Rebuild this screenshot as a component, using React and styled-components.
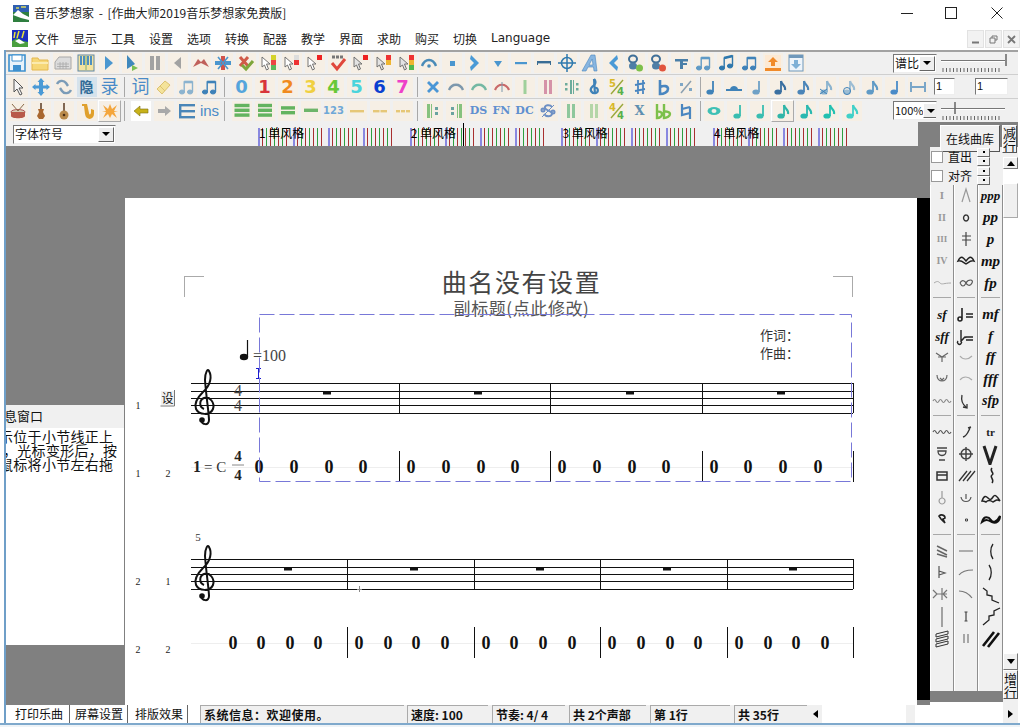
import React from 'react';
import styled, { createGlobalStyle } from 'styled-components';

const GlobalStyle = createGlobalStyle`
  html, body { margin: 0; padding: 0; background: #fff; }
  body { font-family: "Noto Sans CJK SC", "Liberation Sans", sans-serif; font-size: 12px; color: #111; }
  * { box-sizing: border-box; }
`;

const Win = styled.div`
  width: 1020px; height: 727px; display: flex; flex-direction: column; overflow: hidden; background: #fff;
`;
const TitleBar = styled.div` height: 26px; display: flex; align-items: center; padding-left: 13px; gap: 5px; `;
const TitleText = styled.span` font-size: 12px; color: #222; line-height: 26px; word-spacing: 2px; `;
const WinButtons = styled.div` margin-left: auto; display: flex; `;
const WinBtn = styled.div` width: 46px; height: 26px; display: flex; align-items: center; justify-content: center; padding-left: ${p => p.$pl || 0}px; `;
const MenuBar = styled.div` height: 24px; display: flex; align-items: center; padding-left: 12px; `;
const MenuItem = styled.span`
  width: 38px; font-size: 12px; color: #222; margin-left: ${p => (p.$first ? '7px' : '0')};
  font-family: "DejaVu Sans", "Noto Sans CJK SC", sans-serif;
`;
const MdiButtons = styled.div` margin-left: auto; display: flex; gap: 1px; padding-top: 2px; `;
const MdiBtn = styled.div`
  width: 17px; height: 18px; background: #f2f2f2; border: 1px solid #e2e2e2; color: #777;
  display: flex; align-items: center; justify-content: center;
`;
const Client = styled.div`
  flex: 1; margin: 0 2px 0 4px; border-left: 2px solid #6f9fc8; display: flex; flex-direction: column; min-height: 0;
`;
const ToolRow = styled.div`
  height: 24px; background: #f0f0f0; display: flex; align-items: center;
  border-top: ${p => (p.$first ? '2px solid #a2a2a2' : '1px solid #cfcfcf')};
`;
const ToolCell = styled.div`
  flex: none; width: ${p => p.$w || 23}px; height: 22px; display: flex; align-items: center; justify-content: center;
  ${p => p.$on && 'border: 1px solid; border-color: #fff #aaa #aaa #fff;'}
`;
const Tile = styled.div`
  width: 20px; height: 20px; display: flex; align-items: center; justify-content: center;
  background: ${p => (p.$plain ? '#fff' : p.$box ? '#d5e2ec' : '#f6efe5')};
`;
const ToolSep = styled.div`
  flex: none; width: ${p => p.$w}px; height: 20px; position: relative;
  &::after { content: ''; position: absolute; left: 3px; top: 0; bottom: 0; width: 1px; background: #a8a8a8; }
`;
const GlyphText = styled.span`
  font-family: ${p => (p.$serif ? '"DejaVu Serif", serif' : p.$wide ? '"DejaVu Sans", sans-serif' : '"Liberation Sans", "Noto Sans CJK SC", sans-serif')};
  font-size: ${p => p.$s || 17}px; font-weight: ${p => (p.$light ? 400 : 700)}; color: ${p => p.$c}; line-height: 1;
`;
const RightTools = styled.div` margin-left: auto; display: flex; align-items: center; gap: ${p => p.$gap || 3}px; padding-right: ${p => p.$pr || 10}px; `;
const Combo = styled.div`
  width: ${p => p.$w}px; flex: none; height: 19px; background: #fff; display: flex; align-items: center; justify-content: space-between; white-space: nowrap;
  border: 1px solid; border-color: #777 #eee #eee #777; font-size: ${p => p.$fs || 12}px; padding-left: 1px; line-height: 1; overflow: hidden;
`;
const ComboArrow = styled.div`
  flex: none; width: 16px; height: 15px; background: #eee; border: 1px solid; border-color: #fff #666 #666 #fff;
  display: flex; align-items: center; justify-content: center; margin-right: 1px;
  &::after { content: ''; border: 4px solid transparent; border-top: 4px solid #000; border-bottom: 0; }
`;
const NumBox = styled.div`
  width: ${p => p.$w}px; height: 17px; background: #fff; font-size: 11px; padding-left: 1px; line-height: 15px;
  border: 1px solid; border-color: #777 #eee #eee #777; font-family: "Liberation Sans", sans-serif;
`;
const Workspace = styled.div` height: 583px; display: flex; background: #808080; `;
const Center = styled.div` width: 924px; flex: none; display: flex; flex-direction: column; `;
const RulerRow = styled.div` height: 24px; width: 912px; background: #f0f0f0; display: flex; align-items: center; padding-left: 7px; `;
const RulerArea = styled.div` position: relative; margin-left: 142px; height: 24px; flex: none; `;
const RulerLabels = styled.div` position: absolute; left: 0; top: 4px; display: flex; `;
const RulerLabel = styled.span` width: 151.7px; font-size: 12px; line-height: 14px; color: #000; padding-left: 1px; `;
const GrayBand = styled.div` height: 52px; `;
const PageRow = styled.div` flex: 1; display: flex; min-height: 0; `;
const Rail = styled.div` width: 119px; flex: none; padding-top: 207px; `;
const InfoPanel = styled.div` width: 118px; height: 240px; background: #fff; overflow: hidden; `;
const InfoHead = styled.div` height: 23px; background: #f0f0f0; font-size: 13px; line-height: 22px; margin-bottom: 1px; text-indent: -15px; overflow: hidden; `;
const InfoLine = styled.div` font-size: 14px; line-height: 14px; white-space: nowrap; letter-spacing: .3px; margin-left: ${p => p.$x}px; `;
const Sheet = styled.div` width: 792px; flex: none; height: 507px; background: #fff; display: flex; flex-direction: column; position: relative; `;
const BlackStrip = styled.div` width: 13px; flex: none; height: 502px; background: #000; `;
const TitleBlock = styled.div` height: 112px; padding-top: 66px; text-align: center; `;
const SongTitle = styled.div` font-size: 25px; line-height: 34px; color: #444; letter-spacing: 1.6px; margin-left: 1px; `;
const SubTitle = styled.div` font-size: 17px; line-height: 20px; color: #555; letter-spacing: .6px; margin-left: 1px; `;
const Corner = styled.div`
  position: absolute; top: 78px; width: 20px; height: 21px; border-top: 1px solid #aaa;
  ${p => (p.$right ? 'left: 708px; border-right: 1px solid #aaa;' : 'left: 59px; border-left: 1px solid #aaa;')}
`;
const ScoreSvg = styled.svg` display: block; position: relative; overflow: visible; `;
const ScoreText = styled.text`
  font-family: ${p => (p.$cjk ? '"Noto Sans CJK SC", sans-serif' : '"Liberation Serif", serif')};
  font-size: ${p => p.$s || 12}px; font-weight: ${p => (p.$b ? 700 : 400)}; fill: ${p => p.$c || '#222'};
`;
const Side = styled.div` width: 88px; flex: none; display: flex; flex-direction: column; `;
const SideTop = styled.div` height: 25px; flex: none; padding: 3px 1px 0 10px; display: flex; gap: 2px; position: relative; z-index: 1; `;
const RaisedBtn = styled.div`
  width: ${p => p.$w}px; height: ${p => p.$h}px; background: #f0f0f0; flex: none; display: flex; align-items: center; justify-content: center; text-align: center;
  border: 1px solid; border-color: #fff #555 #555 #fff; font-size: ${p => p.$fs || 12}px; line-height: ${p => p.$lh || 12}px; color: #111; overflow: hidden;
`;
const SideBody = styled.div` flex: 1; display: flex; min-height: 0; background: #f0f0f0; `;
const SideLeft = styled.div` width: 73px; flex: none; display: flex; flex-direction: column; `;
const Options = styled.div` height: 38px; flex: none; display: flex; flex-direction: column; position: relative; z-index: 2; `;
const OptionRow = styled.label` height: 19px; display: flex; align-items: center; padding-left: 1px; font-size: 12px; `;
const CheckBox = styled.span` width: 12px; height: 12px; background: #fff; border: 1px solid #999; margin-right: 5px; `;
const Spinner = styled.div` margin-left: auto; margin-right: 13px; width: 13px; display: flex; flex-direction: column; `;
const SpinBtn = styled.div`
  height: 9px; background: #f0f0f0; border: 1px solid; border-color: #fff #666 #666 #fff; display: flex; align-items: center; justify-content: center;
  &::after { content: ''; width: 2px; height: 2px; background: #000; }
`;
const Palette = styled.div` height: 506px; flex: none; display: flex; `;
const PaletteCol = styled.div` width: ${p => p.$w}px; flex: none; border-right: 1px solid #8e8e8e; border-left: 1px solid #fff; `;
const PaletteGroup = styled.div`
  height: 113px; padding-bottom: 3px; margin: 0 2px 5.4px;
  border-bottom: 1px solid #a8a8a8;
  &:last-child { border-bottom: 0; }
`;
const PaletteCell = styled.div` height: 21.8px; display: flex; align-items: center; justify-content: center; margin: 0 -2px; overflow: hidden; `;
const Dyn = styled.span`
  font-family: "Liberation Serif", serif; font-weight: 700; font-style: ${p => (p.$up ? 'normal' : 'italic')}; font-size: ${p => p.$s || 14}px; color: ${p => p.$c || '#111'}; line-height: 1;
`;
const PalFoot = styled.div` flex: 1; background: #808080; `;
const PalEnd = styled.div` height: 3px; flex: none; background: #fff; `;
const ScrollCol = styled.div` width: 15px; flex: none; display: flex; flex-direction: column; padding-top: 10px; background: #f0f0f0; `;
const ScrollBtn = styled.div`
  height: ${p => p.$h}px; flex: none; background: #f0f0f0; border: 1px solid; border-color: #fff #777 #777 #fff; display: flex; align-items: center; justify-content: center;
  &::after { content: ''; border: 4px solid transparent; ${p => (p.$down ? 'border-top: 5px solid #000; border-bottom: 0;' : 'border-bottom: 5px solid #000; border-top: 0;')} }
`;
const ScrollTrack = styled.div` flex: none; height: 484px; background: #fff; padding-top: 14px; `;
const ScrollThumb = styled.div` height: 35px; background: #f0f0f0; border: 1px solid; border-color: #fff #aaa #aaa #fff; `;
const StatusBar = styled.div` height: 18px; flex: none; display: flex; background: #f0f0f0; align-items: stretch; `;
const TabStrip = styled.div` width: 194px; flex: none; display: flex; padding-left: 9px; background: #fff; `;
const StatusTab = styled.div`
  width: ${p => p.$w}px; flex: none; font-size: 12px; line-height: 17px; border-right: 1px solid #666; padding-left: ${p => p.$pl}px; white-space: nowrap;
`;
const StatusPane = styled.div`
  width: ${p => p.$w}px; flex: none; margin-left: ${p => p.$ml ?? 4}px; background: #f0f0f0; border-top: 1px solid #aaa; border-left: 1px solid #aaa;
  font-size: 12px; font-weight: 700; line-height: 17px; padding-left: 3px; white-space: nowrap; overflow: hidden; letter-spacing: ${p => p.$ls || 0}px;
`;
const HScroll = styled.div` margin-left: 2px; flex: 1; display: flex; align-items: stretch; `;
const HArrow = styled.div`
  width: ${p => p.$w}px; flex: none; display: flex; align-items: center; justify-content: center;
  &::after { content: ''; border: 4px solid transparent; ${p => (p.$right ? 'border-left: 5px solid #000; border-right: 0;' : 'border-right: 5px solid #000; border-left: 0;')} }
`;
const HField = styled.div` width: ${p => p.$w}px; flex: none; background: #fff; margin-right: ${p => p.$mr || 0}px; `;
const BottomEdge = styled.div` height: 4px; flex: none; border-top: 2px solid #7fa9cc; background: #eef3f7; margin-left: 0; `;
const SliderWrap = styled.div` width: ${p => p.$w}px; height: 20px; flex: none; `;
const FracText = styled.text`
  font-family: "DejaVu Sans", sans-serif; font-size: 10px; font-weight: 700; fill: ${p => p.$c};
`;

// toolbar drawings
const Note = ({ c = '#3f82b8', flag, x = 0 }) => (
  <g transform={`translate(${x} 0)`}>
    <ellipse cx="7" cy="14" rx="3.6" ry="2.6" fill={c} />
    <path d="M10 14V3" stroke={c} strokeWidth="1.8" />
    {flag && <path d="M10 3c.5 4 5 4 4 9" stroke={c} strokeWidth="2.2" fill="none" />}
  </g>
);
const Pointer = ({ c = '#fff' }) => <path d="M2 3v10l2.5-2 2 5 2-1-2-5H10z" fill={c} stroke="#666" strokeWidth=".9" />;
const Lights = ({ cs }) => cs.map((c, i) => <rect key={i} x="11" y={1 + i * 5} width="5" height="5" fill={c} />);
const Bars = ({ n, c = '#63b35f', w = 14 }) =>
  Array.from({ length: n }, (_, i) => <rect key={i} x={9 - w / 2} y={9 - n * 2.4 + i * 4.8} width={w} height="3.4" fill={c} />);
const Dashes = ({ n }) =>
  Array.from({ length: n }, (_, i) => <rect key={i} x={2 + (i * 15) / n} y="8" width={15 / n - 1} height="2.4" fill="#e6c777" />);
const Beam = ({ c = '#3f82b8', tilt }) => (
  <g fill={c} stroke={c}>
    <ellipse cx="4" cy="14" rx="2.6" ry="2" />
    <ellipse cx="12" cy={tilt ? 12 : 14} rx="2.6" ry="2" />
    <path d={`M6.2 14V4L14.5 ${tilt ? 2 : 4}V${tilt ? 12 : 14}`} strokeWidth="1.4" fill="none" />
    <path d={`M6.2 4L14.5 ${tilt ? 2 : 4}`} strokeWidth="2.6" />
  </g>
);
const Arc = ({ c, w = 2 }) => <path d="M2 12c3-7 11-7 14 0" stroke={c} strokeWidth={w} fill="none" />;
const Fence = ({ c }) => <g fill={c}><rect x="5" y="2" width="3" height="14" /><rect x="10" y="2" width="3" height="14" /></g>;
const Frac = ({ top }) => (
  <g>
    <FracText x="1" y="9" $c="#d8b82a">{top}</FracText>
    <path d="M3 16L15 2" stroke="#9aa83a" strokeWidth="1.400" />
    <FracText x="9" y="17" $c="#58b04a">4</FracText>
  </g>
);

const icons = {
  save: <g><path d="M1 1h16v16H1z" fill="#e8f2fa" stroke="#3d90cf" strokeWidth="1.6" /><path d="M4 1h10v6H4z" fill="#fff" stroke="#3d90cf" /><rect x="5" y="11" width="8" height="6" fill="#3d90cf" /></g>,
  open: <g><path d="M1 4h6l1 2h9v10H1z" fill="#f6d777" stroke="#e4b850" /><path d="M1 9h16" stroke="#fbeaae" strokeWidth="2" /></g>,
  keys: <g><path d="M1 8l4-5h12v12H1z" fill="#dcdcdc" stroke="#a8a8a8" /><path d="M3 10h12M3 12.500h12M6 8v7M9 8v7M12 8v7" stroke="#a8a8a8" strokeWidth=".8" /></g>,
  piano: <g><rect x="1" y="1" width="16" height="16" fill="#f3e3a0" stroke="#5f87a8" /><path d="M4 2v9M7 2v9M11 2v9M14 2v9" stroke="#4e8fbf" strokeWidth="2" /><path d="M9 2v14" stroke="#7fae6e" /></g>,
  play: <path d="M5 2l8 7-8 7z" fill="#4b97d0" />,
  playTo: <g><path d="M4 1l8 9-8 5z" fill="#3f88bd" /><path d="M9 11l6 3-6 3z" fill="#79bf54" /></g>,
  pause: <g fill="#a2a2a2"><rect x="4" y="2" width="4" height="14" /><rect x="10" y="2" width="4" height="14" /></g>,
  back: <path d="M12 3L5 9l7 6z" fill="#a2a2a2" />,
  redM: <path d="M1 13L6 5l3 3 3-3 5 8-4-2-4-2-4 2z" fill="#c0605a" />,
  blueCross: <g><rect x="1" y="7" width="16" height="4" fill="#4a96cf" /><rect x="7" y="2" width="4" height="14" fill="#d0524a" /><path d="M4 3l10 12M14 3L4 15" stroke="#4a96cf" strokeWidth="1.6" /></g>,
  checkX: <g><path d="M3 3l8 9M11 3l-8 9" stroke="#d05a48" strokeWidth="3" /><path d="M5 11l4 4 7-8" stroke="#7da63c" strokeWidth="3" fill="none" /></g>,
  ptr3: <g><Pointer /><Lights cs={['#d4d22a', '#e44', '#5cb85c']} /></g>,
  ptr2: <g><Pointer /><Lights cs={['#ddd', '#e33']} /></g>,
  ptr1: <g><Pointer /><rect x="11" y="1" width="5" height="5" fill="#e22" /></g>,
  ptrB2: <g><Pointer c="#e3e3e3" /><Lights cs={['#e33', '#eeb530']} /></g>,
  ptrB1: <g><Pointer c="#e3e3e3" /><rect x="11" y="1" width="5" height="5" fill="#e22" /></g>,
  ptrB3: <g><Pointer c="#e3e3e3" /><Lights cs={['#e33', '#eeb530', '#4fb84f']} /></g>,
  abc: <g><path d="M3 9l5 6 8-10" stroke="#e0473c" strokeWidth="3" fill="none" /><path d="M3 3h12" stroke="#777" strokeWidth="3" strokeDasharray="3 1" /></g>,
  fermata: <g><path d="M2 12c3-8 11-8 14 0" stroke="#4a8bb8" strokeWidth="2.4" fill="none" /><circle cx="9" cy="12" r="1.800" fill="#4a8bb8" /></g>,
  square: <rect x="7" y="7" width="5" height="5" fill="#4a96cf" />,
  chevR: <path d="M5 1l8 8-8 8 -1-4 4-4-4-4z" fill="#4a9ad6" />,
  tri: <path d="M5 7h8l-4 6z" fill="#4a96cf" />,
  dash: <rect x="3" y="8" width="12" height="2.2" fill="#4a96cf" />,
  dashD: <g fill="#396c94"><rect x="2" y="7" width="14" height="2.4" /><rect x="2" y="9" width="1" height="2" /><rect x="15" y="9" width="1" height="2" /></g>,
  cross: <g stroke="#2f7aaf" strokeWidth="1.5" fill="none"><circle cx="9" cy="9" r="5.500" /><path d="M9 0v18M0 9h18" /></g>,
  bigA: <path d="M1 17L10 1h4l2 16h-3l-.5-4H7l-2 4zM8 11h4l-.8-6z" fill="#89b6e0" stroke="#4a86c0" strokeWidth=".6" />,
  chevL: <path d="M13 1L5 9l8 8 1-4-4-4 4-4z" fill="#4a9ad6" />,
  notePlus: <g><ellipse cx="7" cy="5" rx="4" ry="3.500" fill="none" stroke="#3f6f98" strokeWidth="2" /><ellipse cx="7" cy="12" rx="4" ry="3.500" fill="#4e7ea6" /><circle cx="13.500" cy="14" r="3.500" fill="#7cc04b" /></g>,
  noteMinus: <g><ellipse cx="7" cy="5" rx="4" ry="3.500" fill="none" stroke="#3f6f98" strokeWidth="2" /><ellipse cx="7" cy="12" rx="4" ry="3.500" fill="#4e7ea6" /><circle cx="13.500" cy="14" r="3.500" fill="#e2553e" /></g>,
  tee: <path d="M3 5h13v2.500h-5V9h4v2h-4v4H8V7.500H3z" fill="#4a7fa8" />,
  beam1: <Beam c="#5f9ac6" />,
  beam2: <Beam c="#2f78ad" tilt />,
  beam3: <Beam c="#3f82b8" />,
  up: <g><rect x="1" y="1" width="16" height="16" fill="#fde9d3" /><path d="M9 3l5 5h-3v4H7V8H4z" fill="#f08a2a" /><rect x="1" y="14" width="16" height="3" fill="#f08a2a" /></g>,
  down: <g><rect x="2" y="1" width="14" height="16" fill="#eef4fa" stroke="#6f98bb" /><rect x="2" y="1" width="14" height="3" fill="#6f98bb" /><path d="M7 6h4v4h3l-5 5-5-5h3z" fill="#7fb0d6" /></g>,
  ptr: <path d="M5 1v13l3-3 3 6 2-1-3-6h4z" fill="#f5f5f5" stroke="#555" />,
  move: <path d="M9 0l3.500 4H11v3.500h3.500V6L18 9l-3.500 3v-1.500H11V14h1.500L9 18l-3.500-4H7v-3.500H3.500V12L0 9l3.500-3v1.500H7V4H5.500z" fill="#4a9ad6" />,
  rotate: <g fill="none" stroke="#7b9cb8" strokeWidth="2.400"><path d="M2 6c2-4 7-4 9-1l2 3" /><path d="M16 12c-2 4-7 4-9 1l-2-3" /></g>,
  eraser: <g><path d="M2 11l8-8 5 4-8 9z" fill="#f4e39a" stroke="#dcc271" /><path d="M5 8l5 5" stroke="#dcc271" /></g>,
  noteL: <Beam c="#8bb3cf" />,
  noteD: <Beam c="#3f82b8" />,
  xBlue: <path d="M3 5l2-2 4 4 4-4 2 2-4 4 4 4-2 2-4-4-4 4-2-2 4-4z" fill="#4a96d6" />,
  arcG: <Arc c="#7d98ad" w="2.400" />,
  arcT: <Arc c="#74b8a3" w="2.400" />,
  arcR: <g><Arc c="#c96a6a" w="2.200" /><path d="M9 4v10" stroke="#7d98ad" /></g>,
  barG: <rect x="7.500" y="2" width="3" height="14" fill="#9fd09b" />,
  barsR: <Fence c="#d592a8" />,
  repeat: <g fill="#6dab9c"><rect x="8" y="2" width="2" height="14" /><rect x="11" y="2" width="1" height="14" /><rect x="3" y="5" width="2.500" height="2.500" /><rect x="3" y="10" width="2.500" height="2.500" /><rect x="14" y="5" width="2.500" height="2.500" /><rect x="14" y="10" width="2.500" height="2.500" /></g>,
  clef: <g fill="none" stroke="#3f82b8" strokeWidth="2.200"><path d="M9 1c3 3 1 6-2 8-3 3 0 7 4 6 3-1 2-6-1-5" /><path d="M9 1l1 15" /></g>,
  frac5: <Frac top="5" />,
  frac4: <Frac top="4" />,
  sharp: <path d="M7 2v14M12 2v14M4 7l10-2M4 13l10-2" stroke="#4a86c0" strokeWidth="1.800" fill="none" />,
  flat: <path d="M6 2v14c4 0 8-2 8-5s-4-4-8-2" stroke="#4a86c0" strokeWidth="2.600" fill="none" />,
  pct: <g><path d="M4 15L14 3" stroke="#8a9fb0" strokeWidth="1.500" /><rect x="3" y="5" width="3" height="3" fill="#7fa7c6" /><rect x="12" y="10" width="3" height="3" fill="#7fa7c6" /></g>,
  n1: <Note x="1" />,
  rest: <g fill="#3f82b8"><rect x="1" y="11" width="16" height="2" /><path d="M5 11c1-4 7-4 8 0z" /></g>,
  n2: <Note x="1" c="#6ea0c6" />,
  n3: <Note x="0" flag c="#3a6fa0" />,
  n4: <Note x="0" flag c="#4a84b8" />,
  n5: <g><Note x="0" flag c="#8bb3cf" /><path d="M3 11l7 5M10 11l-7 5" stroke="#3f82b8" /></g>,
  n6: <g><Note x="0" flag c="#9cbdd4" /><circle cx="7" cy="13" r="3.500" fill="none" stroke="#3f82b8" /></g>,
  n7: <Note x="0" flag c="#5f9ac6" />,
  n8: <Note x="1" c="#4a8bc8" />,
  ibar: <path d="M2 4v10M16 4v10M2 9h14" stroke="#7aa6c8" strokeWidth="2" fill="none" />,
  drum: <g><ellipse cx="9" cy="10" rx="7" ry="2.500" fill="#d8c8b0" stroke="#a55" /><path d="M2 10v4c0 3 14 3 14 0v-4" fill="#b85a4a" /><path d="M3 2l6 7M15 2L9 9" stroke="#8a6a48" /></g>,
  violin: <g><path d="M9 1v6" stroke="#5a3a20" strokeWidth="1.500" /><path d="M6 7h6l-1 3 2 4-2 3H7l-2-3 2-4z" fill="#a9672f" /></g>,
  guitar: <g><path d="M9 1v8" stroke="#5a3a20" strokeWidth="1.500" /><circle cx="9" cy="13" r="4.500" fill="#b98a4a" /><circle cx="9" cy="13" r="1.300" fill="#4a2e14" /></g>,
  sax: <path d="M4 2h5l2 9c0 2 2 2 2-1V7l3 1v4c0 6-8 7-9 0L6 4H4z" fill="#e0a02c" />,
  star: <path d="M2 3l5 4 2-5 2 5 5-4-3 6 4 0-4 1 3 6-5-4-2 4-2-4-5 4 3-6-4-1 4 0z" fill="#f4a63c" />,
  arrL: <path d="M2 9l6-5v3h8v4H8v3z" fill="#c8b21a" stroke="#7c6e10" strokeWidth=".6" />,
  arrR: <path d="M16 9l-6-5v3H3v4h7v3z" fill="#a9a9a9" />,
  lines: <g fill="#4a86b8"><rect x="1" y="2" width="16" height="2.400" /><rect x="3" y="8" width="14" height="2.400" /><rect x="1" y="14" width="16" height="2.400" /><rect x="1" y="2" width="2.400" height="14" /></g>,
  b4: <Bars n={3} w={15} />,
  b3: <Bars n={3} w={14} />,
  b2: <Bars n={2} />,
  b1: <Bars n={1} c="#6eb56a" />,
  d1: <rect x="2" y="8" width="14" height="2.400" fill="#e6c777" />,
  d2: <Dashes n={2} />,
  d3: <Dashes n={3} />,
  repL: <g fill="#86c27e"><rect x="3" y="2" width="3" height="14" /><rect x="7" y="2" width="1" height="14" /><rect x="11" y="5" width="3" height="3" fill="#6aa3a0" /><rect x="11" y="10" width="3" height="3" fill="#6aa3a0" /></g>,
  repR: <g fill="#86c27e"><rect x="12" y="2" width="3" height="14" /><rect x="10" y="2" width="1" height="14" /><rect x="4" y="5" width="3" height="3" fill="#6aa3a0" /><rect x="4" y="10" width="3" height="3" fill="#6aa3a0" /></g>,
  segno: <g fill="none" stroke="#6d8fc4" strokeWidth="2"><path d="M13 5c-2-3-8-2-7 1s8 3 7 6-6 3-8 0" /><path d="M3 15L15 3" strokeWidth="1" /><circle cx="4" cy="8" r="1.500" /><circle cx="14" cy="10" r="1.500" /></g>,
  fenceG: <Fence c="#8fc79c" />,
  fenceM: <Fence c="#b5d6a8" />,
  bb: <path d="M3 2v14c3 0 5-2 5-4s-3-3-5-2M10 2v14c3 0 6-2 6-4s-4-3-6-2" stroke="#7cc04b" strokeWidth="2.400" fill="none" />,
  natural: <path d="M5 2v11l8-2M13 5v12M5 7l8-2" stroke="#4a86c0" strokeWidth="2.200" fill="none" />,
  whole: <g><ellipse cx="9" cy="9" rx="6.500" ry="4" fill="#3fc0b5" /><ellipse cx="9" cy="9" rx="2.500" ry="2" fill="#f6efe5" /></g>,
  half1: <Note x="2" c="#39bdb0" />,
  half2: <Note x="2" c="#39bdb0" />,
  e1: <Note x="0" flag c="#2fb5a8" />,
  e2: <Note x="0" flag c="#2ab8b0" />,
  e3: <Note x="0" flag c="#22c0b0" />,
  e4: <Note x="0" flag c="#40d0c8" />,
};

const digit = (t, c) => ({ t, c, s: 18, wide: 1 });
const row1 = ['save','open','keys','piano','play','playTo','pause','back','redM','blueCross','checkX','ptr3','ptr2','ptr1','abc','ptrB1','ptrB2','ptrB3','fermata','square','chevR','tri','dash','dashD','cross','bigA','chevL','notePlus','noteMinus','tee','beam1','beam2','beam3','up','down'];
const row2 = ['ptr','move','rotate',{t:'隐',c:'#2f6a96',s:14,box:1},{t:'录',c:'#4a8bc8',s:18,l:1},{w:8},{t:'词',c:'#4a8bc8',s:18,l:1},'eraser','noteL','noteD',{w:9},
  digit('0','#55a5dc'),digit('1','#d8343a'),digit('2','#f08a1e'),digit('3','#f0d040'),digit('4','#68c838'),digit('5','#4ad4dc'),digit('6','#0b3fd0'),digit('7','#ee40c8'),{w:7},
  'xBlue','arcG','arcT','arcR','barG','barsR','repeat','clef','frac5','sharp','flat','pct',{w:2},'n1','rest','n2','n3','n4','n5','n6','n7','n8','ibar'];
const row3 = ['drum','violin','guitar','sax',{k:'star',on:1},{w:8},{k:'arrL',plain:1},'arrR','lines',{t:'ins',c:'#4a8bc8',s:15,l:1},{w:9},
  'b4','b3','b2','b1',{t:'123',c:'#6fa8d8',s:10,wide:1},'d1','d2','d3',{w:7},
  'repL','repR',{t:'DS',c:'#5f8fd0',s:11,serif:1},{t:'FN',c:'#5f8fd0',s:11,serif:1},{t:'DC',c:'#5f8fd0',s:11,serif:1},'segno','fenceG','fenceM','frac4',{t:'X',c:'#5f8fb0',s:13,serif:1},'bb','natural',{w:5},
  'whole','half1','half2',{k:'e1',on:1},'e2','e3','e4'];

function ToolItems({ items, w }) {
  return items.map((it, i) => {
    if (typeof it === 'string') it = { k: it };
    if (it.w) return <ToolSep key={i} $w={it.w} />;
    return (
      <ToolCell key={i} $w={w} $on={it.on}>
        <Tile $plain={it.plain} $box={it.box}>
          {it.t
            ? <GlyphText $c={it.c} $s={it.s} $light={it.l} $serif={it.serif} $wide={it.wide}>{it.t}</GlyphText>
            : <svg width="18" height="18" viewBox="0 0 18 18">{icons[it.k]}</svg>}
        </Tile>
      </ToolCell>
    );
  });
}

function Slider({ w, knob }) {
  const ticks = Array.from({ length: Math.floor((w - 6) / 3.500) }, (_, i) => 3 + i * 3.500);
  return (
    <SliderWrap $w={w}>
      <svg width={w} height="20">
        <path d={`M1 7.500H${w - 3}`} stroke="#777" strokeWidth="1" />
        <path d={`M1 8.500H${w - 3}`} stroke="#fff" strokeWidth="1" />
        <path d={`M${knob} 1v12`} stroke="#666" strokeWidth="1.500" />
        {ticks.map(x => <path key={x} d={`M${x} 15v4`} stroke="#666" strokeWidth="1" />)}
      </svg>
    </SliderWrap>
  );
}

function Ruler() {
  const ticks = [];
  for (let b = 0; b < 4; b++) {
    for (let q = 0; q < 4; q++) {
      for (let t = 0; t < 8; t++) {
        const x = Math.round(b * 151.7 + q * 35 + t * 4);
        if (q * 35 + t * 4 > 134) continue;
        const color = t === 0 ? '#8888e0' : t % 2 ? '#a83030' : '#2f9f3f';
        ticks.push(<path key={`${b}${q}${t}`} d={`M${x + (t === 0 ? 1 : 0.5)} 6v18`} stroke={color} strokeWidth={t === 0 ? 2 : 1} />);
      }
    }
  }
  return (
    <RulerArea>
      <svg width="620" height="24">
        {ticks}
        <path d="M205.500 1v23" stroke="#000" />
      </svg>
      <RulerLabels>
        {[1, 2, 3, 4].map(n => <RulerLabel key={n}>{n} 单风格</RulerLabel>)}
      </RulerLabels>
    </RulerArea>
  );
}

const Zero = ({ x, y }) => <ScoreText x={x} y={y} $s={18} $b $c="#111" textAnchor="middle">0</ScoreText>;

function Staff({ top, bars, rests }) {
  return (
    <g>
      <g shapeRendering="crispEdges">
        {[0, 8, 15, 22, 30].map(d => <path key={d} d={`M191 ${top + d + 0.5}H853`} stroke="#111" strokeWidth="1" />)}
        {bars.map(x => <path key={x} d={`M${x + 0.5} ${top}v30`} stroke="#111" strokeWidth="1" />)}
      </g>
      {rests.map(x => <rect key={x} x={x - 4} y={top + 8} width="8" height="3.500" fill="#111" />)}
      <g transform={`translate(0 ${top - 383})`}>
        <path d="M201 420C202 425 209 426 209 420C209 414 206 395 205 380C205 372 208 368 209 371C212 376 211 385 203 392C196 399 194 404 196 409C199 415 210 416 213 409C215 403 210 396 204 398C199 400 199 407 204 409" fill="none" stroke="#111" strokeWidth="2" />
        <circle cx="202" cy="420" r="2.800" fill="#111" />
      </g>
    </g>
  );
}

function Score() {
  const row = (xs, y) => xs.map(x => <Zero key={x} x={x} y={y} />);
  return (
    <ScoreSvg width="792" height="392" viewBox="125 310 792 392">
      <ScoreText x={760} y={340} $s={13} $cjk $c="#333">作词：</ScoreText>
      <ScoreText x={760} y={358} $s={13} $cjk $c="#333">作曲：</ScoreText>
      <ellipse cx="244" cy="357" rx="4.200" ry="3.200" fill="#111" />
      <path d="M247.500 357V340" stroke="#111" strokeWidth="1.200" />
      <ScoreText x={253} y={361} $s={16} $c="#444">=100</ScoreText>
      <path d="M256 368.500h5M258.500 368v10M256 378.500h5" stroke="#1a1ad0" fill="none" />

      <Staff top={383} bars={[399, 550, 702, 853]} rests={[327, 478, 630, 781]} />
      <ScoreText x={238} y={396} $s={16} $c="#444" textAnchor="middle">4</ScoreText>
      <ScoreText x={238} y={411} $s={16} $c="#444" textAnchor="middle">4</ScoreText>
      <ScoreText x={138} y={409} $s={10} textAnchor="middle">1</ScoreText>

      <path d="M191 467.500H853" stroke="#eee" />
      <ScoreText x={193} y={472} $s={16} $b>1</ScoreText>
      <ScoreText x={204} y={472} $s={15} $c="#333">= C</ScoreText>
      <ScoreText x={238} y={461} $s={15} $b textAnchor="middle">4</ScoreText>
      <path d="M232 465H244" stroke="#888" strokeWidth="1" />
      <ScoreText x={238} y={480} $s={15} $b textAnchor="middle">4</ScoreText>
      {row([259, 294, 329, 363, 411, 446, 481, 515, 562, 597, 632, 666, 714, 748, 783, 818], 473)}
      <g shapeRendering="crispEdges">
        {[399, 550, 702, 853].map(x => <path key={x} d={`M${x + 0.5} 451v31`} stroke="#111" />)}
      </g>
      <ScoreText x={138} y={477} $s={10} textAnchor="middle">1</ScoreText>
      <ScoreText x={168} y={477} $s={10} textAnchor="middle">2</ScoreText>

      <rect x="259.500" y="314.500" width="592" height="167" fill="none" stroke="#7878d8" strokeDasharray="15 5" />

      <ScoreText x={198} y={541} $s={11} $c="#333" textAnchor="middle">5</ScoreText>
      <Staff top={559} bars={[347, 474, 600, 727, 853]} rests={[288, 414, 540, 667, 793]} />
      <path d="M357 589.500h5M359.500 586v6" stroke="#888" />
      <ScoreText x={138} y={585} $s={10} textAnchor="middle">2</ScoreText>
      <ScoreText x={168} y={585} $s={10} textAnchor="middle">1</ScoreText>

      <path d="M191 643.500H853" stroke="#eee" />
      {row([233, 261, 290, 318, 359, 388, 416, 445, 486, 514, 543, 572, 612, 641, 670, 698, 739, 768, 796, 825], 649)}
      <g shapeRendering="crispEdges">
        {[347, 474, 600, 727, 853].map(x => <path key={x} d={`M${x + 0.5} 627v31`} stroke="#111" />)}
      </g>
      <ScoreText x={138} y={653} $s={10} textAnchor="middle">2</ScoreText>
      <ScoreText x={168} y={653} $s={10} textAnchor="middle">2</ScoreText>

      <path d="M160.500 405V390.500H174" fill="#f0f0f0" stroke="#fff" />
      <rect x="161" y="391" width="13" height="14" fill="#f0f0f0" />
      <path d="M160.500 406H174.500V390" fill="none" stroke="#777" />
      <ScoreText x={167.500} y={403} $s={12} $cjk $c="#111" textAnchor="middle">设</ScoreText>
    </ScoreSvg>
  );
}

const P = (d, c = '#777', w = 1.200) => ({ d, c, w });
const D = (t, s) => ({ t, s });
const R = (t, s = 11) => ({ t, s, roman: 1 });

const palette = [
  [
    [R('I'), R('II', 10), R('III', 9), R('IV', 10), P('M3 10c3-2 4-2 6 0s4 0 11 0', '#aaa', 1)],
    [D('sf', 13), D('sff', 13), P('M5 6l6 4 6-4M11 10v5M7 10h8', '#666'), P('M6 6c0 8 10 8 10 0M9 9l2 2 2-2', '#666'), P('M2 10c1-2 2-2 3 0s2 2 3 0 2-2 3 0 2 2 3 0 2-2 3 0 2 2 3 0', '#888')],
    [P('M2 10c1-2 2-2 3 0s2 2 3 0 2-2 3 0 2 2 3 0 2-2 3 0 2 2 3 0', '#555'), P('M6 4h10M7 7c0 6 8 6 8 0zM8 16h6', '#444', 1.300), P('M6 6h10v8H6zM6 9h10', '#333', 1.500), P('M11 3v7M11 10a3 3 0 1 0 .1 0', '#999'), P('M8 7c2-2 6-1 6 2l-2 1 2 4-4-4z', '#222', 1.600)],
    [P('M6 5l10 5M6 9l10 5M6 13l10 3', '#666', 1.500), P('M8 4v12M8 9l6 2-6 2', '#555'), P('M2 6l4 4-4 4M6 10h10M11 4v12M16 6l-4 4 4 4', '#777'), P('M11 1v20', '#777', 1.300), P('M5 6l12-3v3L5 9zM5 11l12-3v3L5 14zM5 16l12-3v3l-12 3z', '#333', 1)],
  ],
  [
    [P('M7 17L11 4l4 13', '#999'), P('M11 8a2.500 3 0 1 0 .1 0', '#333', 1.400), P('M7 7h9M11 3v14M7 11h9', '#444'), P('M3 10c3-6 5-4 8 0 3-4 5-6 8 0-3-1-5 1-8 3-3-2-5-4-8-3z', '#222', 1.400), P('M5 10c2-4 5-2 6 0s4 4 6 0-4-4-6 0-4 4-6 0', '#555')],
    [P('M7 4v11M3 15a2 2 0 1 0 4 0 2 2 0 1 0-4 0M11 10h7M11 13h7', '#222', 1.600), P('M6 4v11c3-2 4-6 5-3M3 15a2 2 0 1 0 3 0M11 11h7M11 14h7', '#222', 1.400), P('M5 9c3 4 8 4 12 0', '#aaa'), P('M5 11c3-4 8-4 12 0', '#aaa'), P('M7 4c-1 5 0 9 4 12M8 16l4 1 0-4', '#333', 1.300)],
    [P('M8 15c4-1 5-5 7-9M13 6l3-1', '#333', 1.400), P('M11 5a5 5 0 1 0 .1 0M11 3v14M4 10h14', '#444', 1.500), P('M4 15L12 5M8 15L16 5M12 15l8-10', '#333', 1.300), P('M6 9c1 6 9 6 10 0M11 6v5', '#555'), P('M10.500 10h2v2h-2z', '#222', .8)],
    [P('M4 10h14', '#888', 1.300), P('M4 13c3-4 8-5 14-5', '#777'), P('M4 7c5 0 10 3 13 7', '#777'), P('M11 6v9M9.500 6h3M9.500 15h3', '#444'), P('M9 6v9M13 6v9', '#777')],
  ],
  [
    [D('ppp', 13), D('pp', 15), D('p', 15), D('mp', 15), D('fp', 15)],
    [D('mf', 15), D('f', 15), D('ff', 15), D('fff', 15), D('sfp', 14)],
    [{ t: 'tr', s: 11, roman: 1, c: '#222' }, P('M4 2l6 18 6-18', '#222', 3), P('M12 2c-3 3 3 5 0 7s3 4 0 8', '#222', 1.500), P('M2 13c2-6 4-5 6-3s3 2 5-1 4-1 7 4c-3-2-4-1-7 1-3-2-5-2-7 0-2-1-3-1-4-1z', '#222', 1.500), P('M2 13c2-7 7-5 9-2s6 2 9-4c0 5-4 8-8 6s-6-3-10 0z', '#111', 2)],
    [P('M13 3c-3 4-3 11 0 15', '#222', 1.300), P('M9 3c3 4 3 11 0 15', '#222', 1.300), P('M3 4l4 3 0 4 5 1 0 4 7 3', '#222', 1.300), P('M3 19l6-5 0-4 5-1 0-4 6-3', '#222', 1.300), P('M3 18L14 4M8 19L19 5', '#111', 2.600)],
  ],
];

function PaletteItem({ it }) {
  if (it.d) {
    return (
      <svg width="22" height="21" viewBox="0 0 22 21">
        <path d={it.d} stroke={it.c} strokeWidth={it.w} fill="none" />
      </svg>
    );
  }
  if (it.roman) return <Dyn $up $s={it.s} $c={it.c || '#999'}>{it.t}</Dyn>;
  return <Dyn $s={it.s}>{it.t}</Dyn>;
}

export default function App() {
  return (
    <Win>
      <GlobalStyle />
      <TitleBar>
        <svg width="16" height="17" viewBox="0 0 16 17">
          <rect width="16" height="17" fill="#2f7f3f" />
          <rect width="16" height="7" fill="#2f5fb0" />
          <path d="M0 10l5-5 5 4 6 3v3L8 13z" fill="#fff" />
          <path d="M3 3h3M8 2h5" stroke="#d8d860" strokeWidth="1.500" />
        </svg>
        <TitleText>音乐梦想家 - [作曲大师2019音乐梦想家免费版]</TitleText>
        <WinButtons>
          <WinBtn $pl={4}><svg width="12" height="12"><path d="M0 6.500h12" stroke="#222" /></svg></WinBtn>
          <WinBtn><svg width="12" height="12"><rect x=".5" y=".5" width="11" height="11" fill="none" stroke="#222" /></svg></WinBtn>
          <WinBtn><svg width="12" height="12"><path d="M.5.5l11 11M11.500.5l-11 11" stroke="#222" /></svg></WinBtn>
        </WinButtons>
      </TitleBar>
      <MenuBar>
        <svg width="16" height="17" viewBox="0 0 16 17">
          <rect width="16" height="17" fill="#1c2fc0" />
          <path d="M3 2L2 8M7 1L5 8M12 1l-2 7" stroke="#e8e23a" strokeWidth="1.500" />
          <path d="M0 11l5-3 6 3 5 1v5H0z" fill="#4a9f3f" />
          <path d="M3 11l4-2 6 4-5 1z" fill="#fff" />
        </svg>
        {['文件', '显示', '工具', '设置', '选项', '转换', '配器', '教学', '界面', '求助', '购买', '切换', 'Language'].map((m, i) => (
          <MenuItem key={m} $first={i === 0}>{m}</MenuItem>
        ))}
        <MdiButtons>
          <MdiBtn><svg width="9" height="9"><path d="M1 7.500h7" stroke="#777" strokeWidth="2" /></svg></MdiBtn>
          <MdiBtn><svg width="9" height="9"><path d="M3 3V1h5v4H6M1 3h5v5H1z" fill="none" stroke="#777" /></svg></MdiBtn>
          <MdiBtn><svg width="9" height="9"><path d="M1 1l7 7M8 1l-7 7" stroke="#777" strokeWidth="1.800" /></svg></MdiBtn>
        </MdiButtons>
      </MenuBar>
      <Client>
        <ToolRow $first>
          <ToolItems items={row1} w={22.9} />
          <RightTools>
            <Combo $w={44}>谱比<ComboArrow /></Combo>
            <Slider w={68} knob={66} />
          </RightTools>
        </ToolRow>
        <ToolRow>
          <ToolItems items={row2} />
          <RightTools $gap={20} $pr={10}>
            <NumBox $w={21}>1</NumBox>
            <NumBox $w={33}>1</NumBox>
          </RightTools>
        </ToolRow>
        <ToolRow>
          <ToolItems items={row3} />
          <RightTools>
            <Combo $w={44} $fs={11}>100%<ComboArrow /></Combo>
            <Slider w={68} knob={15} />
          </RightTools>
        </ToolRow>
        <Workspace>
          <Center>
            <RulerRow>
              <Combo $w={103}>字体符号<ComboArrow /></Combo>
              <Ruler />
            </RulerRow>
            <GrayBand />
            <PageRow>
              <Rail>
                <InfoPanel>
                  <InfoHead>信息窗口</InfoHead>
                  <InfoLine $x={-7}>示位于小节线正上</InfoLine>
                  <InfoLine $x={-3}>，光标变形后，按</InfoLine>
                  <InfoLine $x={-7}>鼠标将小节左右拖</InfoLine>
                </InfoPanel>
              </Rail>
              <Sheet>
                <Corner />
                <Corner $right />
                <TitleBlock>
                  <SongTitle>曲名没有设置</SongTitle>
                  <SubTitle>副标题(点此修改)</SubTitle>
                </TitleBlock>
                <Score />
              </Sheet>
              <BlackStrip />
            </PageRow>
          </Center>
          <Side>
            <SideTop>
              <RaisedBtn $w={60} $h={27} $fs={12}>在线曲库</RaisedBtn>
              <RaisedBtn $w={15} $h={28} $fs={13} $lh={13}>减行</RaisedBtn>
            </SideTop>
            <SideBody>
              <SideLeft>
                <Options>
                  <OptionRow><CheckBox />直出<Spinner><SpinBtn /><SpinBtn /></Spinner></OptionRow>
                  <OptionRow><CheckBox />对齐<Spinner><SpinBtn /><SpinBtn /></Spinner></OptionRow>
                </Options>
                <Palette>
                  {palette.map((col, c) => (
                    <PaletteCol key={c} $w={c === 2 ? 25 : 24}>
                      {col.map((group, g) => (
                        <PaletteGroup key={g}>
                          {group.map((it, i) => <PaletteCell key={i}><PaletteItem it={it} /></PaletteCell>)}
                        </PaletteGroup>
                      ))}
                    </PaletteCol>
                  ))}
                </Palette>
                <PalFoot />
                <PalEnd />
              </SideLeft>
              <ScrollCol>
                <ScrollBtn $h={12} />
                <ScrollTrack><ScrollThumb /></ScrollTrack>
                <ScrollBtn $h={17} $down />
                <RaisedBtn $w={15} $h={29} $fs={13} $lh={13}>增行</RaisedBtn>
              </ScrollCol>
            </SideBody>
          </Side>
        </Workspace>
        <StatusBar>
          <TabStrip>
            <StatusTab $w={55} $pl={0}>打印乐曲</StatusTab>
            <StatusTab $w={58} $pl={5}>屏幕设置</StatusTab>
            <StatusTab $w={60} $pl={7}>排版效果</StatusTab>
          </TabStrip>
          <StatusPane $w={204} $ml={0} $ls={.5}>系统信息：欢迎使用。</StatusPane>
          <StatusPane $w={81} $ml={3}>速度: 100</StatusPane>
          <StatusPane $w={73}>节奏: 4/ 4</StatusPane>
          <StatusPane $w={77}>共 2个声部</StatusPane>
          <StatusPane $w={80}>第 1行</StatusPane>
          <StatusPane $w={73}>共 35行</StatusPane>
          <HScroll>
            <HArrow $w={13} />
            <HField $w={84} $mr={9} />
            <HField $w={88} />
            <HArrow $w={15} $right />
          </HScroll>
        </StatusBar>
      </Client>
      <BottomEdge />
    </Win>
  );
}
